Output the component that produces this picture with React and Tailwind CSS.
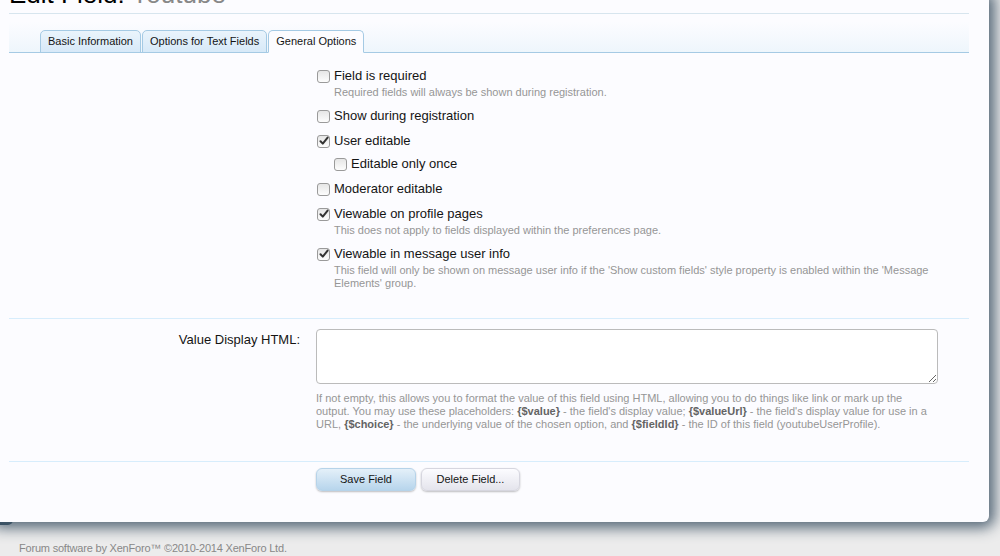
import React from 'react';

const font = { fontFamily: '"Liberation Sans", Arial, sans-serif' };

function Box({ checked }) {
  return (
    <span className="relative mt-[3px] inline-flex h-[13px] w-[13px] shrink-0 items-center justify-center rounded-[3px] border border-[#9a9a9a] bg-gradient-to-b from-[#e6e6e6] to-[#fdfdfd]">
      {checked && (
        <svg width="10" height="10" viewBox="0 0 10 10" className="absolute left-[1px] top-[0px]">
          <path d="M1.5 5.2 L3.8 7.6 L8.6 1.6" fill="none" stroke="#333" strokeWidth="2" strokeLinecap="round" strokeLinejoin="round" />
        </svg>
      )}
    </span>
  );
}

function Option({ label, hint, checked, indent }) {
  return (
    <div className={indent ? '-mt-[2px] pl-[17px]' : ''}>
      <label className="flex items-start gap-[4px]">
        <Box checked={checked} />
        <span className="text-[13px] leading-[18px] text-[#141414]">{label}</span>
      </label>
      {hint && (
        <div className="mb-[1px] mt-[1px] pl-[17px] text-[11px] leading-[13px] text-[#969696]">
          {hint}
        </div>
      )}
    </div>
  );
}

export default function App() {
  const tabs = ['Basic Information', 'Options for Text Fields', 'General Options'];
  const options = [
    { label: 'Field is required', hint: 'Required fields will always be shown during registration.' },
    { label: 'Show during registration' },
    { label: 'User editable', checked: true },
    { label: 'Editable only once', indent: true },
    { label: 'Moderator editable' },
    { label: 'Viewable on profile pages', checked: true, hint: 'This does not apply to fields displayed within the preferences page.' },
    {
      label: 'Viewable in message user info',
      checked: true,
      hint: "This field will only be shown on message user info if the 'Show custom fields' style property is enabled within the 'Message Elements' group.",
    },
  ];

  return (
    <div style={font} className="relative h-[556px] w-[1000px] overflow-hidden bg-[#ececec]">
      {/* sidebar corner peeking out under the panel */}
      <div className="absolute left-0 top-[500px] h-[25px] w-[13px] rounded-br-[5px] bg-[#2b485c]" />

      <div className="relative mr-[11px] flow-root h-[522px] rounded-br-[6px] bg-[#fcfcff] pl-[9px] pr-[20px] shadow-[0_0_14px_6px_rgba(70,90,108,0.9)]">
        {/* title */}
        <div className="flow-root h-[14px] border-b border-[#d7e5ee]">
          <h1 className="-mt-[19px] text-[26px] leading-[26px] text-black">
            Edit Field: <span className="text-[#888]">Youtube</span>
          </h1>
        </div>

        {/* tabs */}
        <div className="mt-[8px] flex h-[31px] items-end border-b border-[#a5cae4] bg-gradient-to-b from-[#fcfcff] to-[#eef6fc] pl-[31px]">
          {tabs.map((t, i) => {
            const active = i === tabs.length - 1;
            return (
              <div
                key={t}
                className={`-mb-px mr-[1px] flex h-[23px] items-center rounded-t-[5px] border border-[#a5cae4] px-[7px] text-[11px] text-[#141414] ${
                  active ? 'border-b-[#fcfcff] bg-[#fcfcff]' : 'bg-gradient-to-b from-[#eaf4fc] to-[#d7e9f8]'
                }`}
              >
                {t}
              </div>
            );
          })}
        </div>

        {/* checkbox options */}
        <div className="flex flex-col gap-[7px] pb-[27px] pl-[308px] pt-[14px]">
          {options.map((o) => (
            <Option key={o.label} {...o} />
          ))}
        </div>

        <div className="border-t border-[#d7edfc]" />

        {/* value display html */}
        <div className="flex gap-[16px] pb-[30px] pt-[10px]">
          <div className="w-[291px] pt-[2px] text-right text-[13px] leading-[18px] text-[#141414]">
            Value Display HTML:
          </div>
          <div className="w-[622px]">
            <textarea className="block h-[55px] w-full resize-y rounded-[4px] border border-[#bbbbbb] bg-white outline-none" />
            <p className="mt-[8px] text-[11px] leading-[13px] text-[#969696]">
              If not empty, this allows you to format the value of this field using HTML, allowing you to do things like link or mark up the output. You may use these placeholders:{' '}
              <b className="font-bold text-[#646464]">{'{$value}'}</b> - the field's display value;{' '}
              <b className="font-bold text-[#646464]">{'{$valueUrl}'}</b> - the field's display value for use in a URL,{' '}
              <b className="font-bold text-[#646464]">{'{$choice}'}</b> - the underlying value of the chosen option, and{' '}
              <b className="font-bold text-[#646464]">{'{$fieldId}'}</b> - the ID of this field (youtubeUserProfile).
            </p>
          </div>
        </div>

        <div className="border-t border-[#d7edfc]" />

        {/* buttons */}
        <div className="flex gap-[5px] pl-[307px] pt-[6px]">
          <button className="h-[23px] w-[100px] rounded-[6px] border border-[#b6d3e9] bg-gradient-to-b from-[#e4f0f9] to-[#b7d5ec] text-[11px] text-[#141414] shadow-[0_1px_2px_rgba(0,0,0,0.25)]">
            Save Field
          </button>
          <button className="h-[23px] w-[99px] rounded-[6px] border border-[#d6d6df] bg-gradient-to-b from-[#fcfcff] to-[#e4e4ec] text-[11px] text-[#141414] shadow-[0_1px_2px_rgba(0,0,0,0.25)]">
            Delete Field...
          </button>
        </div>
      </div>

      <div className="pl-[19px] pt-[19px] text-[11px] leading-[14px] tracking-[-0.2px] text-[#888]">
        Forum software by XenForo™ ©2010-2014 XenForo Ltd.
      </div>
    </div>
  );
}
